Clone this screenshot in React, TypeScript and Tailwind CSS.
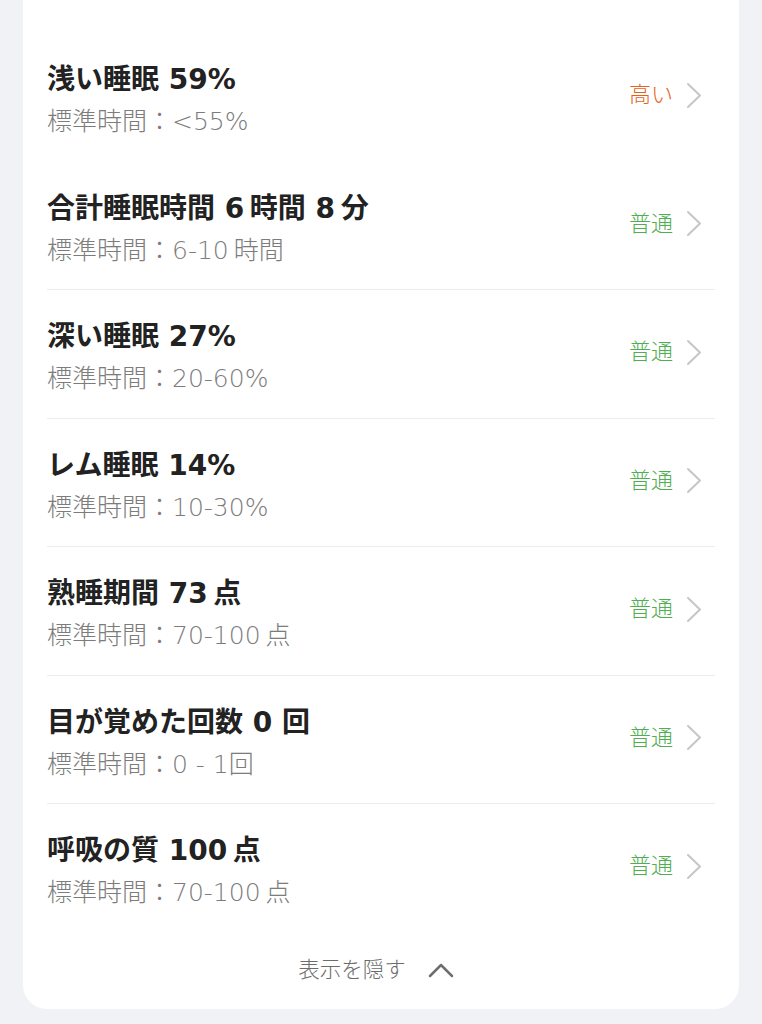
const rows = [
  { title: '浅い睡眠 59%', range: '標準時間：<55%', status: '高い', high: true, divider: false },
  { title: '合計睡眠時間 6\u2009時間 8\u2009分', range: '標準時間：6-10\u2009時間', status: '普通', high: false, divider: false },
  { title: '深い睡眠 27%', range: '標準時間：20-60%', status: '普通', high: false, divider: true },
  { title: 'レム睡眠 14%', range: '標準時間：10-30%', status: '普通', high: false, divider: true },
  { title: '熟睡期間 73\u2009点', range: '標準時間：70-100\u2009点', status: '普通', high: false, divider: true },
  { title: '目が覚めた回数 0 回', range: '標準時間：0 - 1回', status: '普通', high: false, divider: true },
  { title: '呼吸の質 100\u2009点', range: '標準時間：70-100\u2009点', status: '普通', high: false, divider: true },
]

function ChevronRight() {
  return (
    <svg width="17" height="27" viewBox="0 0 17 27" fill="none">
      <polyline points="2,2 14,13.5 2,25" stroke="#c6c6c8" strokeWidth="2" strokeLinecap="round" strokeLinejoin="round" />
    </svg>
  )
}

function ChevronUp() {
  return (
    <svg width="26" height="16" viewBox="0 0 26 16" fill="none">
      <polyline points="2,14 13,3 24,14" stroke="#6e6e6e" strokeWidth="2.5" strokeLinecap="round" strokeLinejoin="round" />
    </svg>
  )
}

export default function App() {
  return (
    <div
      className="min-h-[1024px] w-full bg-[#f1f2f5] pb-[16px]"
      style={{ fontFamily: '"DejaVu Sans", "Noto Sans CJK JP", sans-serif' }}
    >
      <div className="mx-[23px] bg-white rounded-b-[24px] px-[24px] pt-[32px]">
        {rows.map((row, i) => (
          <div
            key={i}
            className={
              'flex items-start justify-between h-[128.5px] pr-[12px] ' +
              (row.divider ? 'border-t border-[#ececec]' : '')
            }
          >
            <div className={row.divider ? 'pt-[28px]' : 'pt-[29px]'}>
              <div className="text-[28px] leading-[38px] font-bold text-[#222222]">
                {row.title}
              </div>
              <div className="mt-[7px] text-[25px] leading-[32px] font-light text-[#7c7c7c]">
                {row.range}
              </div>
            </div>
            <div className={'flex items-center gap-[13px] h-[30px] ' + (row.divider ? 'mt-[47px]' : 'mt-[48px]')}>
              <span
                className={
                  'text-[22px] leading-[30px] font-light ' +
                  (row.high ? 'text-[#e4621a]' : 'text-[#4fae4f]')
                }
              >
                {row.status}
              </span>
              <ChevronRight />
            </div>
          </div>
        ))}
        <div className="flex items-center justify-center gap-[22px] h-[77px] pr-[10px]">
          <span className="text-[21.5px] leading-[30px] font-light text-[#6c6c6c]">表示を隠す</span>
          <ChevronUp />
        </div>
      </div>
    </div>
  )
}
